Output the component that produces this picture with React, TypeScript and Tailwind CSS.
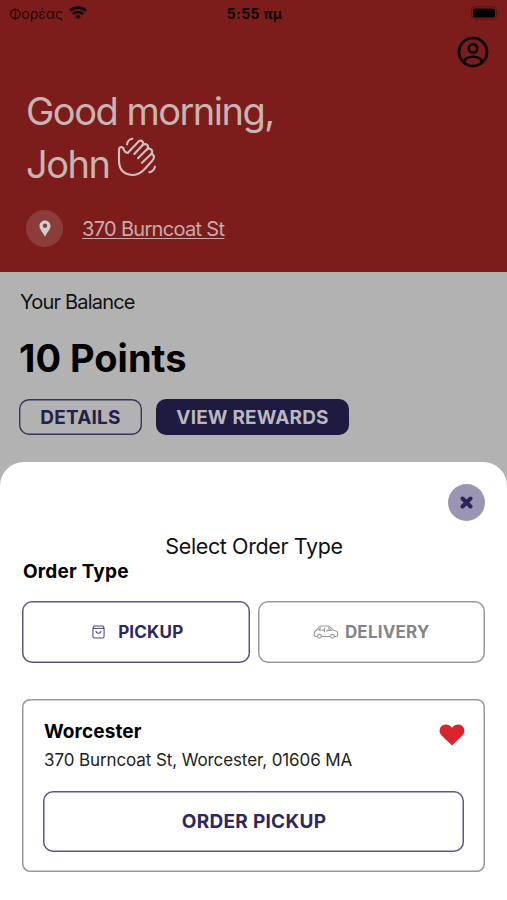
import React from 'react';

const WifiIcon = () => (
    <svg width="18" height="14" viewBox="0 0 18 14" fill="none" stroke="#080202" strokeWidth="2.6">
        <path d="M1 4.8 C5.4 0.5 12.6 0.5 17 4.8" />
        <path d="M4 8 C6.8 5.3 11.2 5.3 14 8" />
        <path d="M9 13 L6.3 10.2 C7.8 8.8 10.2 8.8 11.7 10.2 Z" fill="#080202" stroke="none" />
    </svg>
);

const BatteryIcon = () => (
    <svg width="29" height="14" viewBox="0 0 29 14">
        <rect x="0.5" y="0.8" width="25" height="12.4" rx="3.6" fill="none" stroke="#571413" />
        <rect x="2" y="2.4" width="22" height="9.2" rx="2" fill="#000" />
        <path d="M27 5 Q28.5 7 27 9 Z" fill="#571413" />
    </svg>
);

const ProfileIcon = () => (
    <svg width="32" height="32" viewBox="0 0 32 32" fill="none" stroke="#050101" strokeWidth="2.7">
        <circle cx="16" cy="16" r="14" />
        <circle cx="16" cy="12.4" r="4.2" />
        <path d="M6.8 26 C9 19 23 19 25.2 26" />
    </svg>
);

const WaveIcon = () => (
    <svg className="-mt-4" width="40" height="42" viewBox="17 13 120 126" fill="none" stroke="#d0bdbd" strokeWidth="6.3" strokeLinecap="round" strokeLinejoin="round">
        <path d="M49 64 L81 30 Q88 24 94 30 Q98 36 92 42 L69 67" />
        <path d="M92 42 Q101 34 108 40 Q113 46 107 53 L80 80" />
        <path d="M107 53 Q115 48 121 55 Q125 62 119 68 L92 93" />
        <path d="M119 68 Q126 67 128 75 Q128 82 122 88 L98 114 Q82 130 62 130 Q25 127 23 90 V55 Q23 46 31 46 Q37 47 37 54 Q40 62 49 64" />
        <path d="M47 38 Q49 24 63 21" />
        <path d="M114 122 Q128 118 131 105" />
    </svg>
);

const PinIcon = () => (
    <svg width="12" height="17" viewBox="0 0 12 17" fill="#d0cfd0">
        <path fillRule="evenodd" d="M6 0.4 C2.8 0.4 0.5 2.8 0.5 5.9 C0.5 9.2 3.4 11.4 6 16.6 C8.6 11.4 11.5 9.2 11.5 5.9 C11.5 2.8 9.2 0.4 6 0.4 Z M6 3.6 A2.2 2.2 0 1 1 6 8 A2.2 2.2 0 1 1 6 3.6 Z" />
    </svg>
);

const BagIcon = () => (
    <svg width="13" height="14" viewBox="0 0 14 15" fill="none" stroke="#4a4570" strokeWidth="1.1">
        <path d="M1 3.4 L2.2 1 H11.8 L13 3.4 V12 Q13 14 11.2 14 H2.8 Q1 14 1 12 Z" />
        <path d="M1 3.6 H13" />
        <path d="M4.2 6.2 C4.5 9.8 9.5 9.8 9.8 6.2" />
    </svg>
);

const CarIcon = () => (
    <svg width="26" height="14" viewBox="0 0 26 14" fill="none" stroke="#999" strokeWidth="1.1">
        <path d="M4.5 11.5 H2.5 Q1.2 11 1.3 9 Q1.2 6 3.4 5.4 L6.2 2 Q7 1 8.5 1 H14 Q16 1 17.4 2.4 L20.4 5.2 Q24.6 5.7 24.8 8.5 Q25 11.4 23 11.5 H21.5 M17.5 11.5 H8.5" />
        <path d="M5.5 5.2 L8 2.7 M15 2.7 L18 5.4 H14.5 L13.5 6.6 M5.5 5.2 H10.5 L11.5 6.4 V2.7" />
        <circle cx="6.5" cy="11.3" r="1.9" />
        <circle cx="19.5" cy="11.3" r="1.9" />
    </svg>
);

const HeartIcon = () => (
    <svg width="26" height="22" viewBox="0 0 26 22" fill="#d9252d">
        <path d="M13 21.5 L2.4 11.2 C-0.4 8.2 0.2 3.6 3 1.7 C6.2 -0.4 10.2 0.4 13 3.8 C15.8 0.4 19.8 -0.4 23 1.7 C25.8 3.6 26.4 8.2 23.6 11.2 Z" />
    </svg>
);

const CloseIcon = () => (
    <svg width="13" height="13" viewBox="0 0 13 13" stroke="#2b2459" strokeWidth="4" strokeLinecap="round">
        <path d="M2.5 2.5 L10.5 10.5 M10.5 2.5 L2.5 10.5" />
    </svg>
);

const Header: React.FC = () => (
    <header className="h-[272px] bg-[#7d1d1b]">
        {/* Status bar */}
        <div className="grid h-7 grid-cols-3 items-center pb-0.5 pl-[9px] pr-[7px]">
            <div className="flex items-center gap-1.5">
                <span className="text-[14px] text-[#220807]">Φορέας</span>
                <WifiIcon />
            </div>
            <span className="text-center text-[14px] font-bold tracking-[0.4px] text-[#0c0303]">5:55 πμ</span>
            <div className="flex justify-end"><BatteryIcon /></div>
        </div>

        <div className="flex h-12 items-center justify-end pr-[18px]">
            <ProfileIcon />
        </div>

        <div className="px-[26px] pt-[9px] text-[38px] leading-[53px] tracking-[-1.5px] text-[#c9b4b4]">
            <h1>Good morning,</h1>
            <div className="flex h-[53px] items-center gap-2">
                <span>John</span>
                <WaveIcon />
            </div>
        </div>

        <div className="mt-[19px] flex items-center gap-[19px] px-[26px]">
            <div className="flex h-[37px] w-[37px] items-center justify-center rounded-full bg-[#8b3d3b]">
                <PinIcon />
            </div>
            <span className="text-[20px] tracking-[-0.68px] text-[#c6acab] underline decoration-1 underline-offset-2">370 Burncoat St</span>
        </div>
    </header>
);

const Balance: React.FC = () => (
    <section className="px-[19px] pt-[18px]">
        <p className="pl-px text-[20px] leading-6 tracking-[-0.8px] text-[#111]">Your Balance</p>
        <h2 className="mt-5 text-[38px] font-bold leading-[48px] text-black">10 Points</h2>
        <div className="mt-[17px] flex gap-[14px]">
            <button className="h-9 w-[123px] rounded-[10px] pt-0.5 text-[19px] font-bold tracking-[0.2px] text-[#25204a] shadow-[inset_0_0_0_1.4px_#393456]">DETAILS</button>
            <button className="h-9 w-[193px] rounded-[10px] bg-[#1f1a40] pt-0.5 text-[19px] font-bold tracking-[0.15px] text-[#b9b8be]">VIEW REWARDS</button>
        </div>
    </section>
);

const OrderSheet: React.FC = () => (
    <div className="absolute inset-x-0 bottom-0 h-[438px] rounded-t-[24px] bg-white px-[22px] pt-[22px]">
        <div className="flex justify-end">
            <button className="flex h-[37px] w-[37px] items-center justify-center rounded-full bg-[#9b95b3]">
                <CloseIcon />
            </button>
        </div>
        <h3 className="mt-[13px] pl-px text-center text-[21.5px] leading-[25px] tracking-[-0.38px] text-[#111]">Select Order Type</h3>
        <p className="pl-px pt-px text-[19px] font-bold leading-6 tracking-[0.2px] text-black">Order Type</p>

        <div className="mt-[17px] grid grid-cols-2 gap-2">
            <button className="flex h-[62px] items-center justify-center gap-[13px] rounded-[10px] pl-1 text-[17px] font-bold tracking-[0.2px] text-[#2f2860] shadow-[inset_0_0_0_1.5px_#5b567f]">
                <BagIcon />
                <span className="pt-px">PICKUP</span>
            </button>
            <button className="flex h-[62px] items-center justify-center gap-[6px] rounded-[10px] text-[17px] font-bold tracking-[0.2px] text-[#858585] shadow-[inset_0_0_0_1.5px_#999]">
                <CarIcon />
                <span className="pt-px">DELIVERY</span>
            </button>
        </div>

        {/* Selected store */}
        <div className="mt-9 h-[173px] rounded-lg px-[21px] pt-[21px] shadow-[inset_0_0_0_1.5px_#999]">
            <div className="flex justify-between">
                <div className="pl-px">
                    <h4 className="text-[19px] font-bold leading-6 tracking-[0.1px] text-black">Worcester</h4>
                    <p className="mt-1 text-[17px] leading-6 tracking-[-0.1px] text-[#222]">370 Burncoat St, Worcester, 01606 MA</p>
                </div>
                <div className="-mr-px pt-1"><HeartIcon /></div>
            </div>
            <button className="mt-[19px] h-[61px] w-full rounded-[10px] pl-px pt-px text-[19px] font-bold tracking-[0.3px] text-[#2f2860] shadow-[inset_0_0_0_1.5px_#5b567f]">ORDER PICKUP</button>
        </div>
    </div>
);

const App: React.FC = () => {
    return (
        <div className="relative h-[900px] w-[507px] overflow-hidden bg-[#b2b2b2] font-['Inter',sans-serif]">
            <Header />
            <Balance />
            <OrderSheet />
        </div>
    );
};

export default App;
